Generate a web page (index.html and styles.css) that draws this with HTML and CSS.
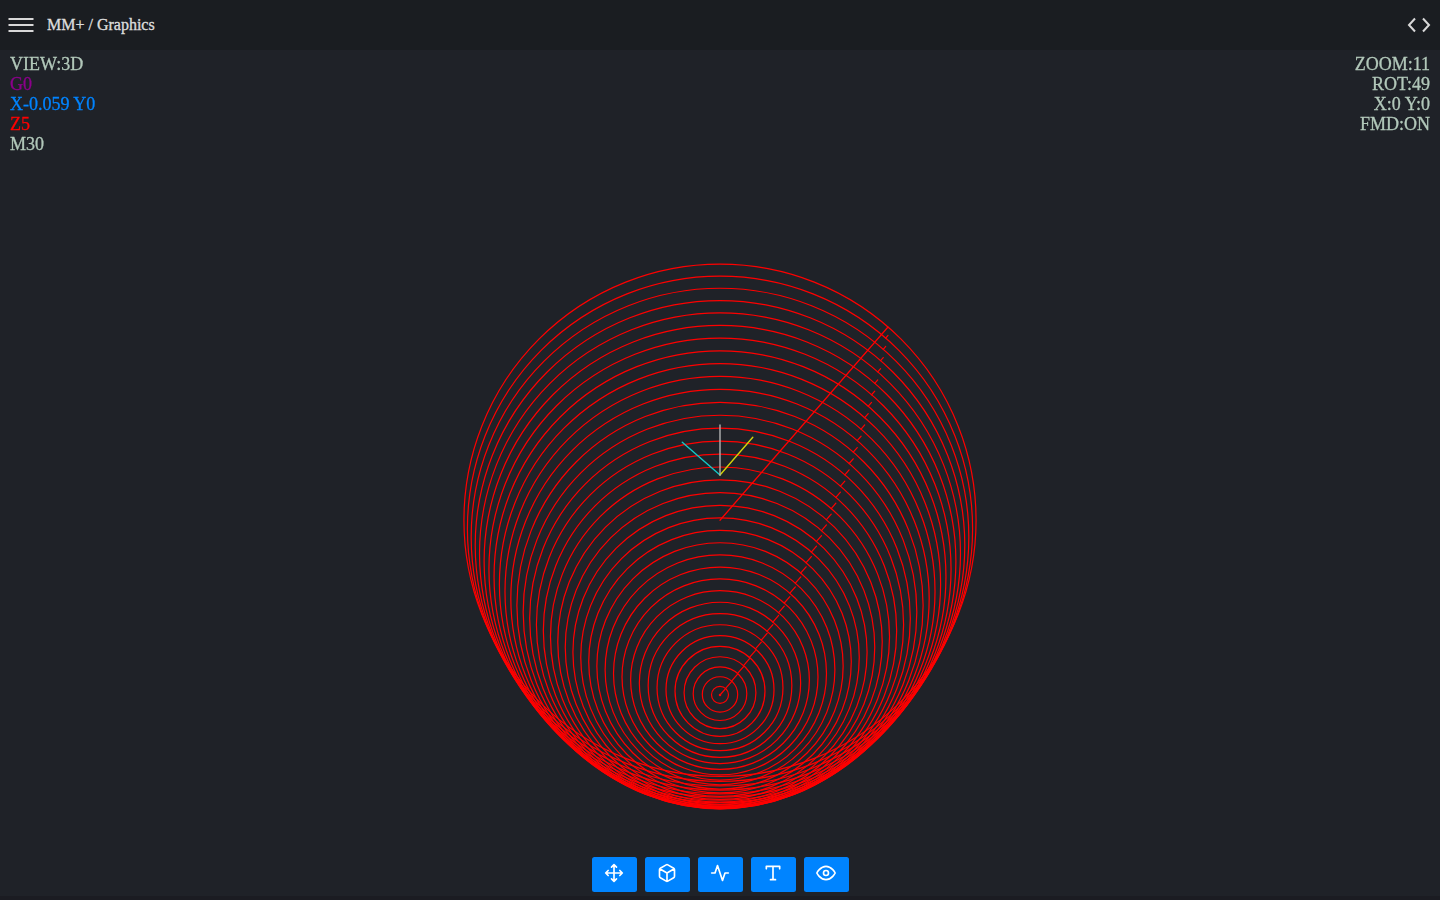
FILE: index.html
```html
<!DOCTYPE html>
<html lang="en">
<head>
<meta charset="utf-8">
<title>MM+ / Graphics</title>
<link rel="stylesheet" href="styles.css">
</head>
<body>
<header class="topbar">
  <svg class="menu" width="26" height="16" viewBox="0 0 26 16"><path d="M0.5 2h25M0.5 8h25M0.5 14h25"/></svg>
  <h1 class="title">MM+ / Graphics</h1>
  <svg class="code" width="24" height="16" viewBox="0 0 24 16"><path d="M8 1.5 2 8l6 6.500M16 1.500 22 8l-6 6.500"/></svg>
</header>
<main class="stage">
  <canvas class="plot" id="plot" width="1440" height="846"></canvas>
  <div class="readouts">
    <div class="readout">
      <div>VIEW:3D</div>
      <div class="rapid">G0</div>
      <div class="move">X-0.059 Y0</div>
      <div class="depth">Z5</div>
      <div>M30</div>
    </div>
    <div class="readout right">
      <div>ZOOM:11</div>
      <div>ROT:49</div>
      <div>X:0 Y:0</div>
      <div>FMD:ON</div>
    </div>
  </div>
  <nav class="tools">
    <button class="tool" aria-label="Move"><svg viewBox="0 0 24 24"><path d="M5 9l-3 3 3 3M9 5l3-3 3 3M15 19l-3 3-3-3M19 9l3 3-3 3M2 12h20M12 2v20"/></svg></button>
    <button class="tool" aria-label="View"><svg viewBox="0 0 24 24"><path d="M21 16V8a2 2 0 0 0-1-1.730l-7-4a2 2 0 0 0-2 0l-7 4A2 2 0 0 0 3 8v8a2 2 0 0 0 1 1.730l7 4a2 2 0 0 0 2 0l7-4A2 2 0 0 0 21 16zM3.270 6.960 12 12.010l8.730-5.050M12 22.080V12"/></svg></button>
    <button class="tool" aria-label="Toolpath"><svg viewBox="0 0 24 24"><path d="M22 12h-4l-3 9L9 3l-3 9H2"/></svg></button>
    <button class="tool" aria-label="Text"><svg viewBox="0 0 24 24"><path d="M4 7V4h16v3M9 20h6M12 4v16"/></svg></button>
    <button class="tool" aria-label="Visibility"><svg viewBox="0 0 24 24"><path d="M1 12s4-8 11-8 11 8 11 8-4 8-11 8-11-8-11-8z"/><circle cx="12" cy="12" r="3"/></svg></button>
  </nav>
</main>
<script src="plot.js"></script>
</body>
</html>
```
FILE: styles.css
```css
* { box-sizing: border-box; }
body {
  margin: 0;
  height: 100vh;
  display: flex;
  flex-direction: column;
  overflow: hidden;
  background: #1b1c22;
  font-family: "Liberation Serif", "Times New Roman", serif;
}
.topbar {
  height: 50px;
  flex: none;
  display: flex;
  align-items: center;
  padding: 0 9px 0 8px;
  background: #1a1d21;
  color: #dcdcdc;
}
.topbar svg { fill: none; stroke: #d8d8d8; stroke-width: 2; }
.title { margin: 0 auto 0 13px; font-size: 16px; line-height: 20px; font-weight: 400; -webkit-text-stroke: 0.35px #dcdcdc; }
.stage {
  height: 846px;
  display: grid;
  grid-template-rows: 1fr auto;
  background: #1f2228;
}
.plot { grid-area: 1 / 1 / 3 / 2; display: block; }
.readouts {
  grid-area: 1 / 1 / 2 / 2;
  display: flex;
  justify-content: space-between;
  padding: 4px 10px;
  z-index: 1;
  color: #b2c8ba;
  font-size: 18px;
  line-height: 20px;
  -webkit-text-stroke: 0.3px currentColor;
}
.readout > div { -webkit-text-stroke-color: currentColor; }
.right { text-align: right; }
.rapid { color: #8b008b; }
.move { color: #0084ff; }
.depth { color: #f00; }
.tools {
  grid-area: 2 / 1 / 3 / 2;
  z-index: 1;
  display: flex;
  justify-content: center;
  gap: 8px;
  padding-bottom: 4px;
}
.tool {
  width: 45px;
  height: 35px;
  padding: 0 0 3px;
  border: 0;
  border-radius: 2.500px;
  background: #0084ff;
  display: flex;
  align-items: center;
  justify-content: center;
}
.tool svg {
  width: 20px;
  height: 20px;
  fill: none;
  stroke: #fff;
  stroke-width: 2;
  stroke-linecap: round;
  stroke-linejoin: round;
}
```
FILE: plot.js
```js
const ctx = document.getElementById('plot').getContext('2d');
const ZOOM = 11;
const ROT = 49 * Math.PI / 180;
const ORIGIN = { x: 720, y: 425 };
const BALL = 25;
const STEP = 1 / 30;
const PASSES = 36;
const OFFSET = Math.asin(0.059 / BALL);

// Plan-oblique projection: XY keeps its shape, Z shifts vertically.
function project(x, y, z) {
  return [
    ORIGIN.x + (x * Math.sin(ROT) + y * Math.cos(ROT)) * ZOOM,
    ORIGIN.y + (x * Math.cos(ROT) - y * Math.sin(ROT)) * ZOOM - z * ZOOM
  ];
}

function line(a, b, color) {
  ctx.strokeStyle = color;
  ctx.beginPath();
  ctx.moveTo(...a);
  ctx.lineTo(...b);
  ctx.stroke();
}

ctx.lineWidth = 1.2;
ctx.lineCap = 'round';
let previous = 0;
for (let i = PASSES; i >= 0; i--) {
  const angle = i * STEP - OFFSET;
  const radius = BALL * Math.sin(angle);
  const z = 5 - BALL * Math.cos(angle);
  line(project(0, previous, z), project(0, radius, z), '#f00');
  const [cx, cy] = project(0, 0, z);
  ctx.beginPath();
  ctx.arc(cx, cy, Math.abs(radius) * ZOOM, 0, Math.PI * 2);
  ctx.stroke();
  previous = radius;
}

const AXIS = 50 / ZOOM;
ctx.lineWidth = 1.4;
line(project(0, 0, 0), project(-AXIS, 0, 0), '#14c8c8');
line(project(0, 0, 0), project(0, AXIS, 0), '#d2d20a');
line(project(0, 0, 0), project(0, 0, AXIS), '#b4b4b4');
```
